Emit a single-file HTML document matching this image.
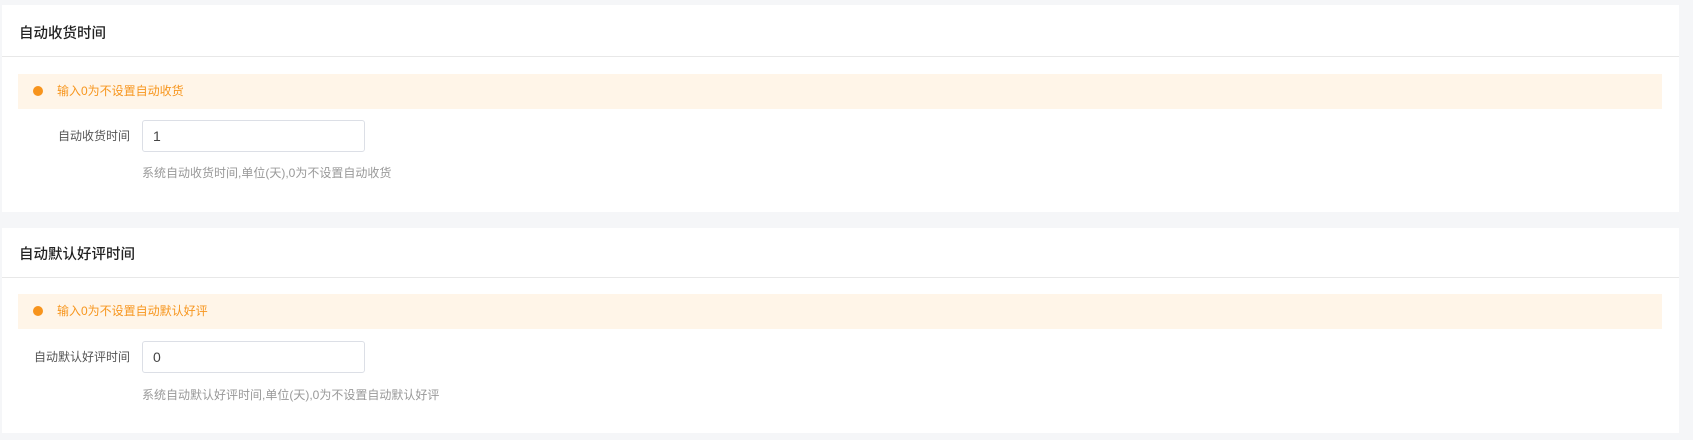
<!DOCTYPE html>
<html><head><meta charset="utf-8"><style>
*{margin:0;padding:0;box-sizing:border-box}
body{width:1693px;height:440px;background:#f5f6f8;font-family:"Liberation Sans","Noto Sans CJK SC",sans-serif;position:relative;overflow:hidden}
.card{position:absolute;left:2px;width:1677px;background:#fff}
.title{position:absolute;left:17px;font-size:14.5px;color:#222;font-weight:500}
.div{position:absolute;left:0;right:0;height:1px;background:#e8e8e8}
.alert{position:absolute;left:16px;width:1644px;height:35px;background:#fff5e8;color:#f7961e;font-size:12px;line-height:35px;padding-left:39px}
.alert i{position:absolute;left:15px;top:12px;width:10px;height:10px;border-radius:50%;background:#f7941d}
.label{position:absolute;width:128px;text-align:right;font-size:12px;color:#555}
.input{position:absolute;left:140px;width:223px;height:32px;border:1px solid #dcdfe6;border-radius:3px;font-size:14px;color:#444;line-height:30px;padding-left:10px}
.help{position:absolute;left:140px;font-size:12px;color:#999}
</style></head><body>
<div class="card" style="top:5px;height:207px">
  <div class="title" style="top:17px">自动收货时间</div>
  <div class="div" style="top:51px"></div>
  <div class="alert" style="top:69px"><i></i>输入0为不设置自动收货</div>
  <div class="label" style="top:122px">自动收货时间</div>
  <div class="input" style="top:115px">1</div>
  <div class="help" style="top:159px">系统自动收货时间,单位(天),0为不设置自动收货</div>
</div>
<div class="card" style="top:228px;height:205px">
  <div class="title" style="top:15px">自动默认好评时间</div>
  <div class="div" style="top:49px"></div>
  <div class="alert" style="top:66px"><i></i>输入0为不设置自动默认好评</div>
  <div class="label" style="top:120px">自动默认好评时间</div>
  <div class="input" style="top:113px">0</div>
  <div class="help" style="top:158px">系统自动默认好评时间,单位(天),0为不设置自动默认好评</div>
</div>
</body></html>
